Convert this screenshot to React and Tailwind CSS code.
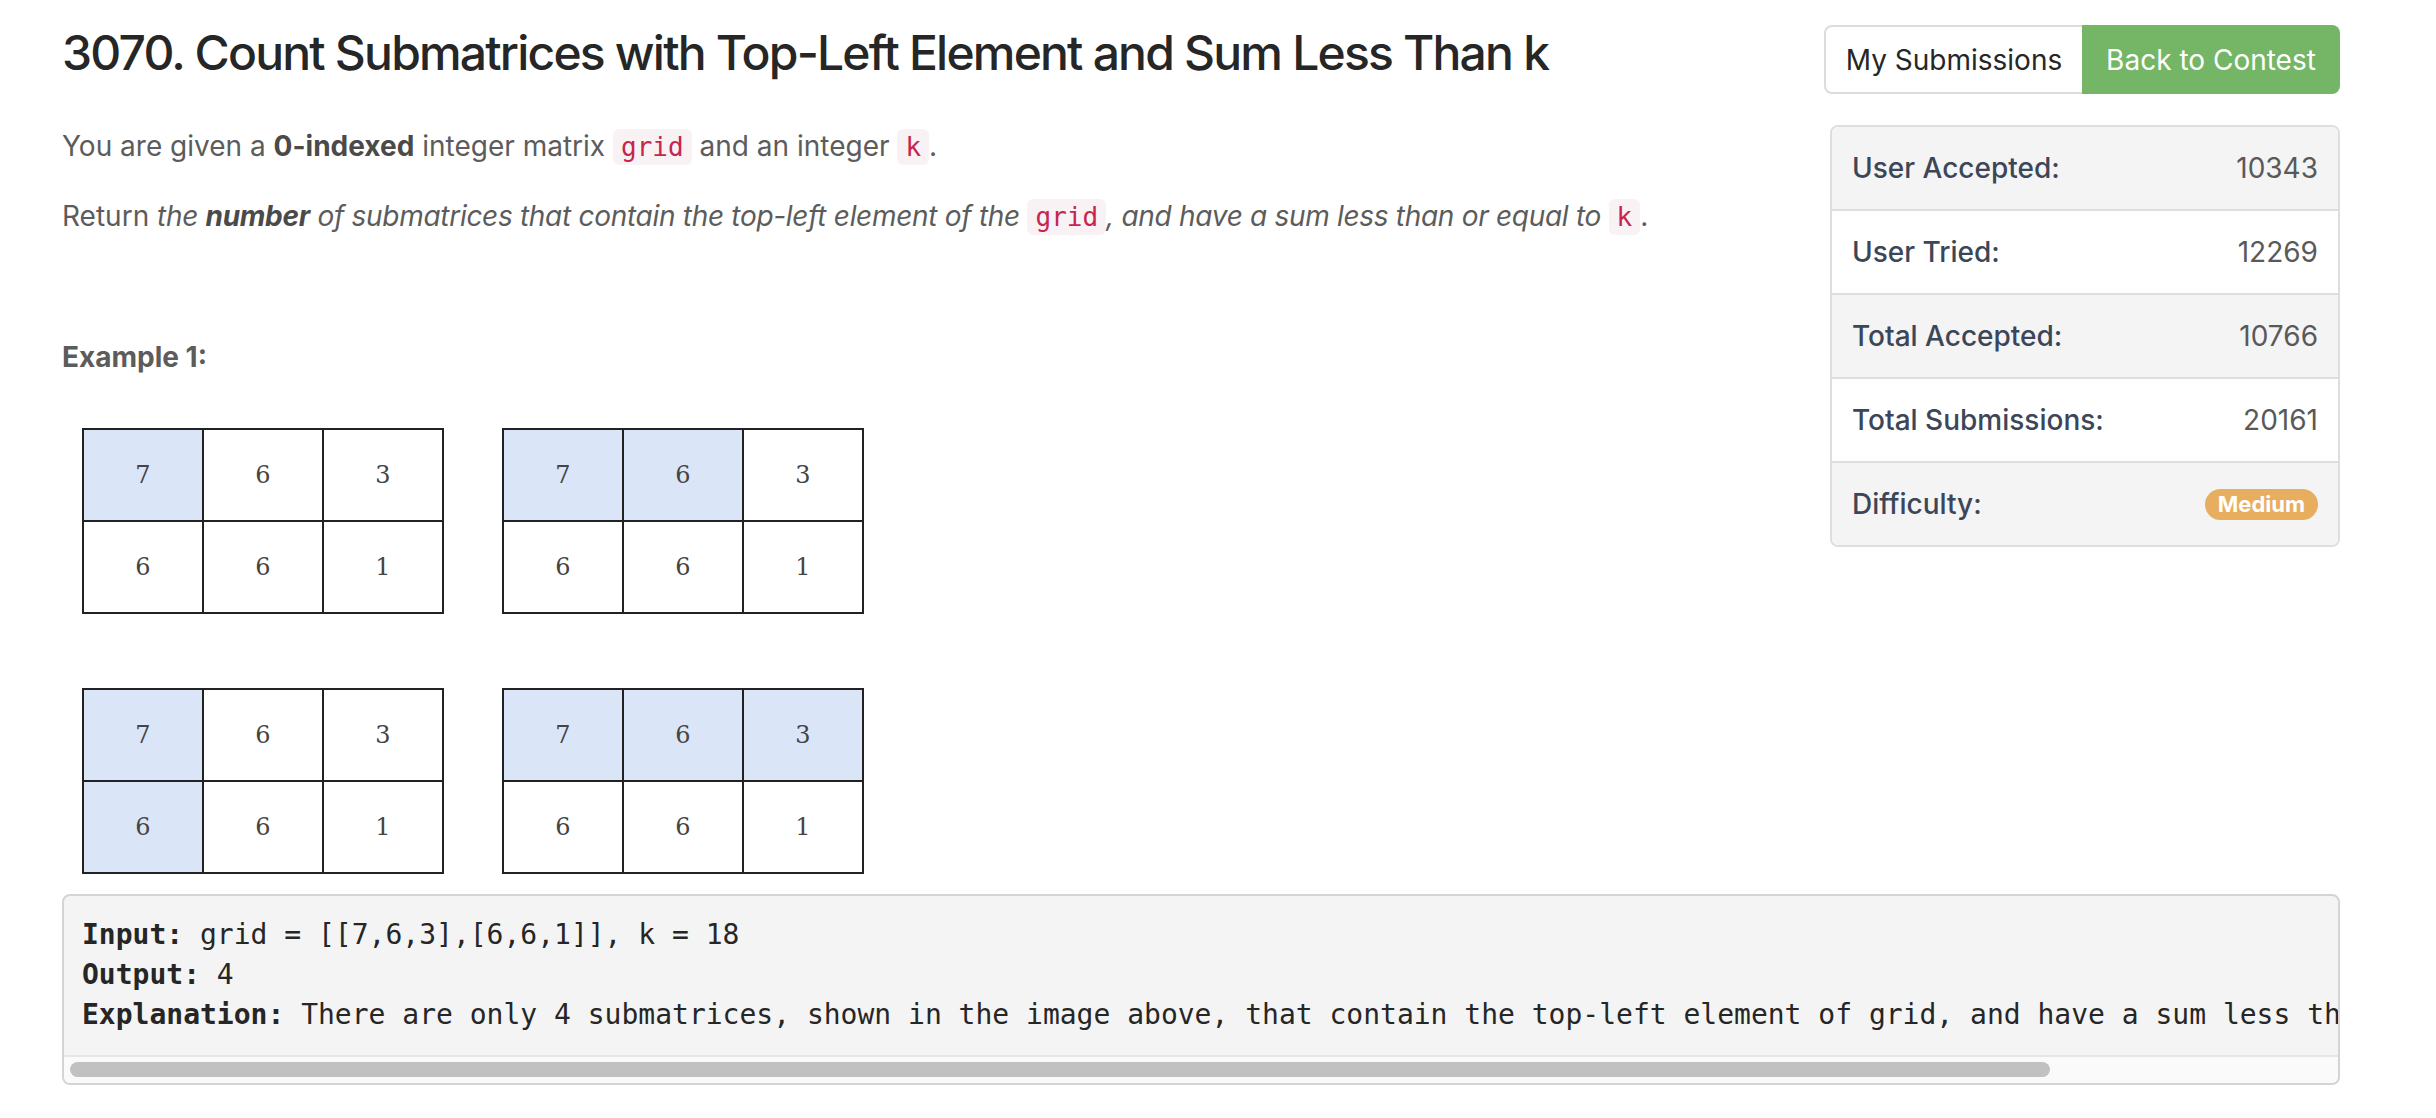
const stats = [
  { label: "User Accepted:", value: "10343" },
  { label: "User Tried:", value: "12269" },
  { label: "Total Accepted:", value: "10766" },
  { label: "Total Submissions:", value: "20161" },
];

const grid = [
  [7, 6, 3],
  [6, 6, 1],
];

// which cells are shaded in each picture
const shaded = [
  [[0, 0]],
  [[0, 0], [0, 1]],
  [[0, 0], [1, 0]],
  [[0, 0], [0, 1], [0, 2]],
];

function Code({ children }) {
  return (
    <code className="font-['DejaVu_Sans_Mono',monospace] text-[26px] not-italic text-[#c7254e] bg-[#f9f2f4] rounded-[6px] px-[8px] py-[3px]">
      {children}
    </code>
  );
}

function Matrix({ marks }) {
  const isOn = (r, c) => marks.some(([a, b]) => a === r && b === c);
  return (
    <div className="grid grid-cols-3 gap-[2px] p-[2px] bg-[#222] w-[362px]">
      {grid.map((row, r) =>
        row.map((n, c) => (
          <div
            key={r + "-" + c}
            className={
              "h-[90px] flex items-center justify-center font-['DejaVu_Serif',serif] text-[24px] text-[#444] " +
              (isOn(r, c) ? "bg-[#dae6f8]" : "bg-white")
            }
          >
            {n}
          </div>
        ))
      )}
    </div>
  );
}

export default function App() {
  return (
    <div className="min-h-screen bg-white font-['Inter',sans-serif] pt-[24px] pl-[62px] pr-[96px]">
      <div className="flex">
        <div className="flex-1">
          <h1 className="text-[48px] leading-[1.2] font-medium text-[#262626] tracking-[-1.8px]">
            3070. Count Submatrices with Top-Left Element and Sum Less Than k
          </h1>

          <div className="text-[28px] leading-[44.8px] text-[#5c5c5c]">
            <p className="mt-[42px]">
              You are given a <strong className="font-bold text-[#4a4a4a]">0-indexed</strong> integer matrix{" "}
              <Code>grid</Code> and an integer <Code>k</Code>.
            </p>
            <p className="mt-[25px]">
              Return{" "}
              <em className="tracking-[-0.3px]">
                the <strong className="font-bold text-[#4a4a4a]">number</strong> of submatrices that contain the
                top-left element of the{" "}
              </em>
              <Code>grid</Code>
              <em className="tracking-[-0.3px]">, and have a sum less than or equal to </em>
              <Code>k</Code>.
            </p>
            <p className="mt-[95px] font-bold text-[#5c5c5c]">Example 1:</p>
          </div>

          <div className="mt-[48px] ml-[20px] grid grid-cols-[362px_362px] gap-x-[58px] gap-y-[74px] w-fit">
            {shaded.map((m, i) => (
              <Matrix key={i} marks={m} />
            ))}
          </div>
        </div>

        <aside className="w-[516px] shrink-0 ml-[40px] pt-[1px]">
          <div className="flex h-[69px] text-[28px]">
            <button className="flex-1 border-2 border-r-0 border-[#dcdcdc] rounded-l-[8px] bg-white text-[#262626]">
              My Submissions
            </button>
            <button className="w-[258px] rounded-r-[8px] bg-[#74b566] text-white">
              Back to Contest
            </button>
          </div>

          <div className="mt-[31px] ml-[6px] border-2 border-[#dedede] rounded-[8px] overflow-hidden text-[28px]">
            {stats.map((s, i) => (
              <div
                key={s.label}
                className={
                  "h-[84px] flex items-center justify-between px-[20px] border-b-2 border-[#dedede] " +
                  (i % 2 === 0 ? "bg-[#f4f4f4]" : "bg-white")
                }
              >
                <span className="font-medium text-[#3b4658]">{s.label}</span>
                <span className="text-[#595959]">{s.value}</span>
              </div>
            ))}
            <div className="h-[82px] flex items-center justify-between px-[20px] bg-[#f4f4f4]">
              <span className="font-medium text-[#3b4658]">Difficulty:</span>
              <span className="rounded-full bg-[#e7ae5f] text-white font-bold text-[22px] leading-[31px] px-[13px]">
                Medium
              </span>
            </div>
          </div>
        </aside>
      </div>

      <div className="mt-[20px] border-2 border-[#d4d4d4] rounded-[8px] bg-[#f4f4f4] overflow-hidden">
        <pre className="font-['DejaVu_Sans_Mono',monospace] text-[28px] leading-[40px] text-[#262626] px-[18px] pt-[19px] pb-[20px] whitespace-pre overflow-hidden">
          <strong>Input:</strong> grid = [[7,6,3],[6,6,1]], k = 18{"\n"}
          <strong>Output:</strong> 4{"\n"}
          <strong>Explanation:</strong> There are only 4 submatrices, shown in the image above, that contain the top-left element of grid, and have a sum less than or equal to 18.
        </pre>
        <div className="h-[28px] border-t-2 border-[#e6e6e6] bg-[#fafafa] flex items-center px-[6px]">
          <div className="h-[15px] w-[1980px] rounded-full bg-[#c1c1c1]" />
        </div>
      </div>
    </div>
  );
}
